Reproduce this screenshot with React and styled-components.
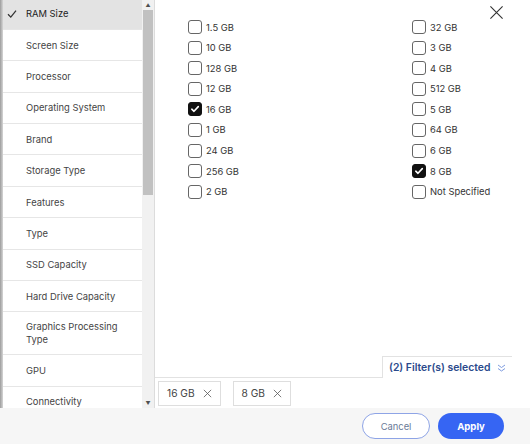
import React from 'react'
import styled, { createGlobalStyle } from 'styled-components'

const categories = [
  'RAM Size', 'Screen Size', 'Processor', 'Operating System', 'Brand',
  'Storage Type', 'Features', 'Type', 'SSD Capacity', 'Hard Drive Capacity',
  'Graphics Processing Type', 'GPU', 'Connectivity',
]

const leftOptions = [
  ['1.5 GB', false], ['10 GB', false], ['128 GB', false], ['12 GB', false],
  ['16 GB', true], ['1 GB', false], ['24 GB', false], ['256 GB', false], ['2 GB', false],
]

const rightOptions = [
  ['32 GB', false], ['3 GB', false], ['4 GB', false], ['512 GB', false],
  ['5 GB', false], ['64 GB', false], ['6 GB', false], ['8 GB', true], ['Not Specified', false],
]

const Check = ({ on }) => (
  <Box $on={on}>
    {on && (
      <svg width="10" height="10" viewBox="0 0 10 10">
        <path d="M1.8 5.2 L4 7.3 L8.3 2.6" fill="none" stroke="#fff" strokeWidth="1.6" strokeLinecap="round" strokeLinejoin="round" />
      </svg>
    )}
  </Box>
)

const Option = ({ label, on }) => (
  <OptionRow>
    <Check on={on} />
    <span>{label}</span>
  </OptionRow>
)

const XIcon = ({ size, color, width }) => (
  <svg width={size} height={size} viewBox="0 0 16 16">
    <path d="M1.5 1.5 L14.5 14.5 M14.5 1.5 L1.5 14.5" stroke={color} strokeWidth={width} fill="none" />
  </svg>
)

const App = () => {
  return (
    <>
      <GlobalStyle />
      <Frame>
        <Main>
          <Edge />
          <Sidebar>
            <CatList>
              {categories.map((c, i) => (
                <Cat key={c} $active={i === 0}>
                  {i === 0 && (
                    <Tick>
                      <svg width="10" height="9" viewBox="0 0 10 9">
                        <path d="M1 4.8 L3.8 7.6 L9 1.2" fill="none" stroke="#333" strokeWidth="1.3" />
                      </svg>
                    </Tick>
                  )}
                  {c}
                </Cat>
              ))}
            </CatList>
          </Sidebar>
          <Scrollbar>
            <Arrow>▲</Arrow>
            <Thumb />
            <Spacer />
            <Arrow>▼</Arrow>
          </Scrollbar>
          <Content>
            <CloseBtn>
              <XIcon size={15} color="#333" width={1.2} />
            </CloseBtn>
            <Grid>
              <Column>
                {leftOptions.map(([l, on]) => <Option key={l} label={l} on={on} />)}
              </Column>
              <Column>
                {rightOptions.map(([l, on]) => <Option key={l} label={l} on={on} />)}
              </Column>
            </Grid>
            <SelectedRow>
              <SelectedTab>
                (2) Filter(s) selected
                <svg width="9" height="8" viewBox="0 0 9 8">
                  <path d="M1 1 L4.5 3.5 L8 1 M1 4.5 L4.5 7 L8 4.5" stroke="#7d9be0" strokeWidth="1" fill="none" />
                </svg>
              </SelectedTab>
            </SelectedRow>
            <Tags>
              <Tag>16 GB <XIcon size={9} color="#555" width={1.4} /></Tag>
              <Tag>8 GB <XIcon size={9} color="#555" width={1.4} /></Tag>
            </Tags>
          </Content>
          <Gutter />
        </Main>
        <Footer>
          <CancelButton>Cancel</CancelButton>
          <ApplyButton>Apply</ApplyButton>
        </Footer>
      </Frame>
    </>
  )
}

export default App

const GlobalStyle = createGlobalStyle`
  html, body {
    margin: 0;
    padding: 0;
    background: #fff;
  }
  body {
    font-family: Inter, "Liberation Sans", sans-serif;
    color: #333;
  }
  * { box-sizing: border-box; }
`

const Frame = styled.div`
  width: 530px;
  height: 444px;
  display: flex;
  flex-direction: column;
  overflow: hidden;
`

const Main = styled.div`
  height: 408px;
  display: flex;
`

const Edge = styled.div`
  width: 3px;
  background: linear-gradient(to right, #9c9c9c, #d6d6d6);
`

const Sidebar = styled.div`
  width: 139px;
  overflow: hidden;
  background: #fff;
`

const CatList = styled.div`
  margin-top: -1.5px;
  display: flex;
  flex-direction: column;
`

const Cat = styled.div`
  position: relative;
  min-height: 31.4px;
  padding: 8px 6px 8px 23px;
  font-size: 9.4px;
  line-height: 13px;
  color: ${p => (p.$active ? '#222' : '#444')};
  background: ${p => (p.$active ? '#e3e3e3' : '#fff')};
  border-bottom: 1px solid #e6e6e6;
  display: flex;
  align-items: center;
`

const Tick = styled.span`
  position: absolute;
  left: 4px;
  top: 50%;
  transform: translateY(-50%);
  display: flex;
`

const Scrollbar = styled.div`
  width: 13px;
  background: #f1f1f1;
  border-right: 1px solid #dcdcdc;
  display: flex;
  flex-direction: column;
  align-items: center;
`

const Arrow = styled.div`
  height: 10px;
  font-size: 5px;
  line-height: 10px;
  color: #505050;
`

const Thumb = styled.div`
  width: 10px;
  height: 185px;
  background: #c1c1c1;
`

const Spacer = styled.div`
  flex: 1;
`

const Content = styled.div`
  flex: 1;
  position: relative;
  display: flex;
  flex-direction: column;
  background: #fff;
`

const CloseBtn = styled.div`
  position: absolute;
  top: 5px;
  right: 8px;
  display: flex;
`

const Grid = styled.div`
  flex: 1;
  display: grid;
  grid-template-columns: 224px 1fr;
  padding: 20px 0 0 33px;
`

const Column = styled.div`
  display: flex;
  flex-direction: column;
  gap: 6.6px;
`

const OptionRow = styled.div`
  display: flex;
  align-items: center;
  gap: 4px;
  height: 14px;
  font-size: 9.4px;
  color: #333;
`

const Box = styled.div`
  width: 14px;
  height: 14px;
  border-radius: 3px;
  border: 1px solid ${p => (p.$on ? '#111' : '#666')};
  background: ${p => (p.$on ? '#111' : '#fff')};
  display: flex;
  align-items: center;
  justify-content: center;
`

const SelectedRow = styled.div`
  display: flex;
  justify-content: flex-end;
  border-bottom: 1px solid #e2e2e2;
`

const SelectedTab = styled.div`
  width: 130px;
  height: 22px;
  margin-bottom: -1px;
  background: #fff;
  border-top: 1px solid #e2e2e2;
  border-left: 1px solid #e2e2e2;
  display: flex;
  align-items: center;
  justify-content: space-between;
  padding: 0 6px 0 6px;
  font-size: 10.4px;
  font-weight: 600;
  color: #2b4a8c;
`

const Tags = styled.div`
  height: 30px;
  display: flex;
  align-items: center;
  gap: 12px;
  padding-left: 3px;
`

const Tag = styled.div`
  height: 25px;
  border: 1px solid #dedede;
  display: flex;
  align-items: center;
  gap: 8px;
  padding: 0 8px;
  font-size: 10.2px;
  color: #444;
`

const Gutter = styled.div`
  width: 18px;
  background: #fff;
`

const Footer = styled.div`
  height: 36px;
  background: #f6f6f6;
  display: flex;
  align-items: center;
  justify-content: flex-end;
  gap: 8px;
  padding-right: 26px;
`

const CancelButton = styled.button`
  width: 68px;
  height: 26px;
  border-radius: 14px;
  border: 1px solid #8ea4e6;
  background: #fff;
  color: #6a7a98;
  font-family: Inter, "Liberation Sans", sans-serif;
  font-size: 9.4px;
`

const ApplyButton = styled.button`
  width: 66px;
  height: 26px;
  border-radius: 14px;
  border: none;
  background: #3665f3;
  color: #fff;
  font-family: Inter, "Liberation Sans", sans-serif;
  font-size: 9.6px;
  font-weight: 700;
`
